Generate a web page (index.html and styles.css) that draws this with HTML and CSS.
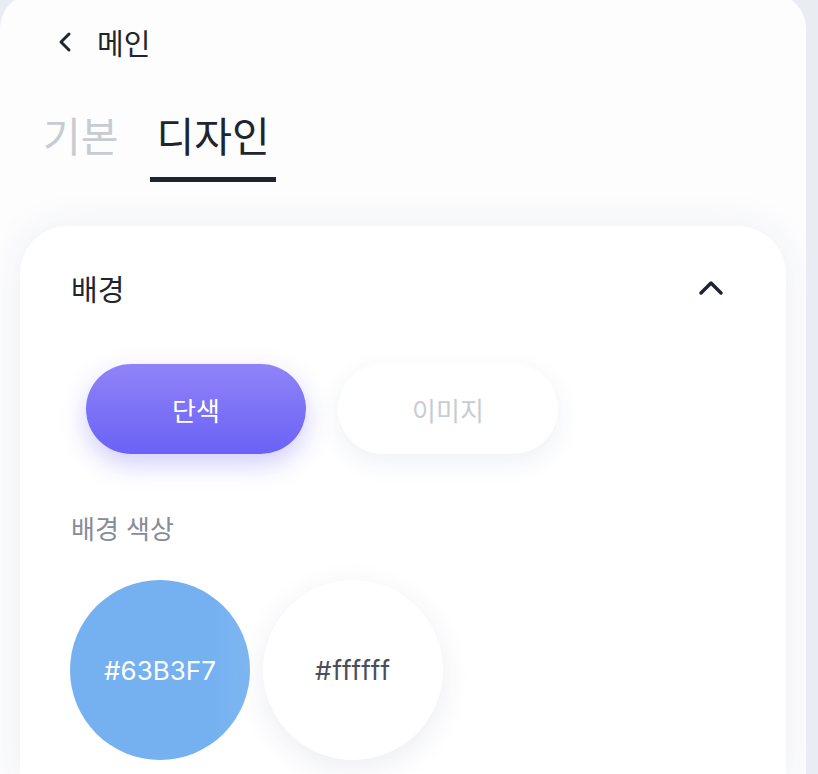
FILE: index.html
```html
<!DOCTYPE html>
<html lang="ko">
<head>
<meta charset="utf-8">
<title>디자인</title>
<link rel="stylesheet" href="styles.css">
</head>
<body>
<div class="panel">
  <div class="back">
    <svg class="back-icon" width="16" height="22" viewBox="0 0 16 22"><path d="M12 3 L4 11 L12 19" fill="none" stroke="#1f2530" stroke-width="3" stroke-linecap="round" stroke-linejoin="round"/></svg>
    <span class="back-text">메인</span>
  </div>
  <div class="tabs">
    <div class="tab">기본</div>
    <div class="tab active">디자인</div>
  </div>
  <div class="card">
    <div class="card-head">
      <span class="card-title">배경</span>
      <svg class="up-icon" width="26" height="16" viewBox="0 0 26 16"><path d="M3 13 L13 3 L23 13" fill="none" stroke="#1f2530" stroke-width="3.5" stroke-linecap="round" stroke-linejoin="round"/></svg>
    </div>
    <div class="seg">
      <div class="seg-btn on">단색</div>
      <div class="seg-btn">이미지</div>
    </div>
    <div class="label">배경 색상</div>
    <div class="swatches">
      <div class="swatch blue">#63B3F7</div>
      <div class="swatch white">#ffffff</div>
    </div>
  </div>
</div>
</body>
</html>
```
FILE: styles.css
```css
html, body {
  margin: 0;
  padding: 0;
}
body {
  background: #e9edf3;
  font-family: "Noto Sans CJK KR", "Noto Sans", sans-serif;
  color: #1f2530;
  height: 774px;
  overflow: hidden;
}
.panel {
  width: 806px;
  height: 780px;
  margin-top: -6px;
  background: #fdfdfe;
  border-radius: 34px 34px 0 0;
  box-sizing: border-box;
  padding-top: 6px;
  overflow: hidden;
}
.back {
  display: flex;
  align-items: center;
  height: 84px;
  padding-left: 57px;
}
.back-icon {
  display: block;
  margin-right: 24px;
}
.back-text {
  font-size: 29px;
  line-height: 1;
}
.tabs {
  display: flex;
  gap: 26px;
  padding-left: 37px;
  margin-top: 22px;
}
.tab {
  font-size: 41px;
  line-height: 56px;
  padding: 0 6px 15px;
  color: #c8cbd0;
  border-bottom: 5px solid transparent;
}
.tab.active {
  color: #1f2530;
  border-bottom-color: #1f2530;
}
.card {
  margin: 44px 20px 0;
  background: #ffffff;
  border-radius: 48px 48px 0 0;
  box-shadow: 0 0 40px rgba(40, 60, 110, 0.07);
  padding: 40px 50px 0 50px;
  height: 560px;
  box-sizing: border-box;
}
.card-head {
  display: flex;
  align-items: center;
  justify-content: space-between;
  padding-left: 1px;
  padding-right: 12px;
  height: 44px;
}
.card-title {
  font-size: 29px;
  line-height: 1;
}
.up-icon {
  display: block;
}
.seg {
  display: flex;
  gap: 32px;
  margin-top: 54px;
  padding-left: 16px;
}
.seg-btn {
  width: 220px;
  height: 90px;
  border-radius: 45px;
  display: flex;
  align-items: center;
  justify-content: center;
  font-size: 26px;
  color: #c8ccd2;
  background: #ffffff;
  box-shadow: 0 8px 26px rgba(40, 60, 110, 0.08);
}
.seg-btn.on {
  color: #ffffff;
  background: linear-gradient(180deg, #9083f8 0%, #6a62f6 100%);
  box-shadow: 0 10px 26px rgba(108, 99, 246, 0.32);
}
.label {
  margin-top: 57px;
  padding-left: 1px;
  font-size: 26px;
  line-height: 34px;
  color: #868c98;
}
.swatches {
  display: flex;
  gap: 13px;
  margin-top: 35px;
}
.swatch {
  width: 180px;
  height: 180px;
  border-radius: 50%;
  display: flex;
  align-items: center;
  justify-content: center;
  font-family: Inter, "Noto Sans", sans-serif;
  font-size: 26px;
}
.swatch.blue {
  background: linear-gradient(90deg, #75b0f0 80%, #7eb7f2 100%);
  color: #ffffff;
}
.swatch.white {
  background: #ffffff;
  color: #4a4f59;
  letter-spacing: 1px;
  box-shadow: 0 8px 30px rgba(40, 60, 110, 0.09);
}
```
